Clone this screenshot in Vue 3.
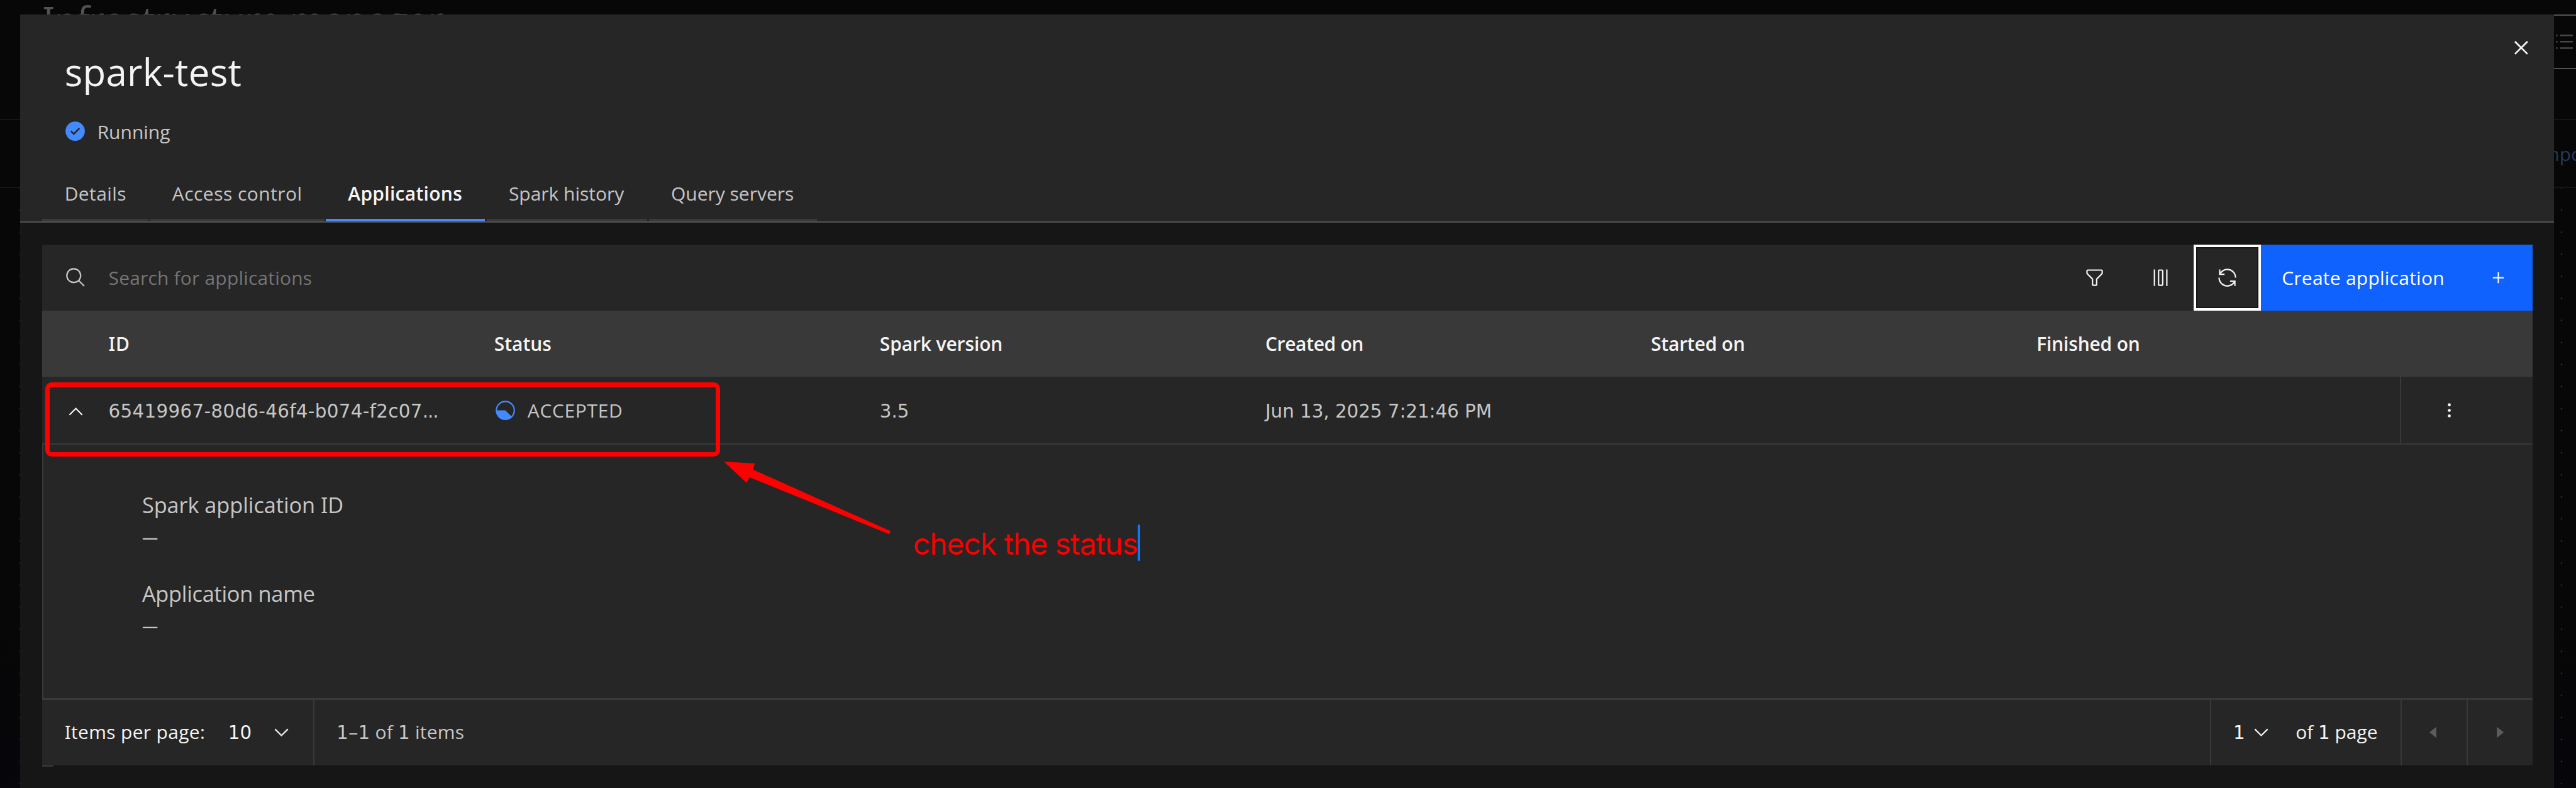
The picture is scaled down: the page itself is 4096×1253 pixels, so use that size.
<script setup>
const tabs = [
  { label: 'Details', cls: 't-details' },
  { label: 'Access control', cls: 't-access' },
  { label: 'Applications', cls: 't-apps', active: true },
  { label: 'Spark history', cls: 't-history' },
  { label: 'Query servers', cls: 't-query' },
]
</script>

<template>
  <div class="page">
    <div class="backdrop" aria-hidden="true">
      <div class="bg-title"><span class="si">I</span>nfrastructure manager</div>
      <div class="bg-line line-a"></div>
      <div class="bg-line line-b"></div>
      <div class="dots dots-left"></div>
      <div class="dots dots-right"></div>
      <div class="bg-button">
        <svg viewBox="0 0 33 28"><path d="M0 0h3v3H0zM8 0h24v3H8zM0 12h3v3H0zM8 12h24v3H8zM0 24h3v3H0zM8 24h24v3H8z" /></svg>
      </div>
      <div class="bg-import"><span class="si">I</span>mport</div>
    </div>

    <section class="panel">
      <header class="head">
        <svg class="close" viewBox="0 0 32 32"><path d="M17.4141 16L24 9.4141 22.5859 8 16 14.5859 9.4143 8 8 9.4141 14.5859 16 8 22.5859 9.4143 24 16 17.4141 22.5859 24 24 22.5859z" /></svg>
        <h1>spark-test</h1>
        <div class="state">
          <svg class="ic blue" viewBox="0 0 32 32"><path fill-rule="evenodd" d="M16 2A14 14 0 1 0 30 16 14 14 0 0 0 16 2ZM14 21.59l-5-5L10.59 15 14 18.41 21.41 11l1.6 1.59Z" /></svg>
          <span>Running</span>
        </div>
        <nav class="tabs">
          <div v-for="t in tabs" :key="t.label" class="tab" :class="[t.cls, { active: t.active }]">{{ t.label }}</div>
        </nav>
      </header>

      <div class="table">
        <div class="toolbar">
          <svg class="ic search" viewBox="0 0 32 32"><path d="M29 27.5859l-7.5521-7.5521a11.0177 11.0177 0 1 0-1.4141 1.4141L27.5859 29ZM4 13a9 9 0 1 1 9 9A9.01 9.01 0 0 1 4 13Z" /></svg>
          <span class="placeholder">Search for applications</span>
          <div class="tool"><svg class="ic" viewBox="0 0 32 32"><path d="M18 28H14a2 2 0 0 1-2-2V18.41L4.59 11A2 2 0 0 1 4 9.59V6A2 2 0 0 1 6 4H26a2 2 0 0 1 2 2V9.59A2 2 0 0 1 27.41 11L20 18.41V26A2 2 0 0 1 18 28ZM6 6V9.59l8 8V26h4V17.59l8-8V6Z" /></svg></div>
          <div class="tool"><svg class="ic" viewBox="0 0 32 32"><path d="M24 4H26V28H24zM18 6V26H14V6h4m0-2H14a2 2 0 0 0-2 2V26a2 2 0 0 0 2 2h4a2 2 0 0 0 2-2V6a2 2 0 0 0-2-2zM6 4H8V28H6z" /></svg></div>
          <div class="tool focused"><svg class="ic" viewBox="0 0 32 32"><path d="M12 10H6.78A11 11 0 0 1 27 16h2A13 13 0 0 0 6 7.68V4H4v8h8zM20 22h5.22A11 11 0 0 1 5 16H3a13 13 0 0 0 23 8.32V28h2V20H20z" /></svg></div>
          <div class="create">
            <span>Create application</span>
            <svg class="ic" viewBox="0 0 32 32"><path d="M17 15V8h-2v7H8v2h7v7h2v-7h7v-2z" /></svg>
          </div>
        </div>

        <div class="row thead">
          <div class="gutter"></div>
          <div class="cell c-id"><span class="si">I</span>D</div>
          <div class="cell">Status</div>
          <div class="cell c-version">Spark version</div>
          <div class="cell c-created">Created on</div>
          <div class="cell c-started">Started on</div>
          <div class="cell c-finished">Finished on</div>
        </div>

        <div class="row body">
          <div class="gutter"><svg class="ic chev-up" viewBox="0 0 16 16"><path d="M8 5L13 10 12.3 10.7 8 6.4 3.7 10.7 3 10z" /></svg></div>
          <div class="cell num v-id">65419967-80d6-46f4-b074-f2c07<span class="dots3">...</span></div>
          <div class="cell v-status">
            <svg class="ic blue" viewBox="0 0 32 32"><circle cx="16" cy="16" r="13" fill="none" stroke="#4589ff" stroke-width="2" /><path d="M16 16H3A13 13 0 0 0 25.2 25.2Z" /></svg>
            <span>ACCEPTED</span>
          </div>
          <div class="cell num">3.5</div>
          <div class="cell num v-created">Jun 13, 2025 7:21:46 PM</div>
          <div class="cell"></div>
          <div class="cell"></div>
          <div class="menu"><svg class="ic" viewBox="0 0 32 32"><circle cx="16" cy="8" r="2.2" /><circle cx="16" cy="16" r="2.2" /><circle cx="16" cy="24" r="2.2" /></svg></div>
        </div>

        <div class="detail">
          <div class="field f-id">
            <div class="label">Spark application <span class="si">I</span>D</div>
            <div class="value">—</div>
          </div>
          <div class="field f-name">
            <div class="label">Application name</div>
            <div class="value">—</div>
          </div>
        </div>

        <footer class="pager">
          <div class="size">
            <span class="p-label"><span class="si">I</span>tems per page:</span>
            <span class="p-size"><span class="digit">10</span></span>
            <svg class="ic" viewBox="0 0 16 16"><path d="M8 11L3 6 3.7 5.3 8 9.6 12.3 5.3 13 6z" /></svg>
          </div>
          <div class="range"><span class="digit">1</span>–<span class="digit">1</span> of <span class="digit">1</span> items</div>
          <div class="pages">
            <span class="p-page"><span class="digit">1</span></span>
            <svg class="ic" viewBox="0 0 16 16"><path d="M8 11L3 6 3.7 5.3 8 9.6 12.3 5.3 13 6z" /></svg>
            <span class="p-of">of <span class="digit">1</span> page</span>
          </div>
          <div class="arrow"><svg class="ic" viewBox="0 0 32 32"><path d="M20 24L10 16 20 8z" /></svg></div>
          <div class="arrow"><svg class="ic" viewBox="0 0 32 32"><path d="M12 8L22 16 12 24z" /></svg></div>
        </footer>
        <div class="stub"></div>
      </div>
    </section>

    <div class="mark"></div>
    <svg class="pointer" viewBox="0 0 315 138"><path d="M0 0L58.6 3.5 54.6 14.8 314.8 131.3 312.5 137.2 48.2 29.5 43 40.2z" /></svg>
    <div class="note"><span>check the status</span><i></i></div>
  </div>
</template>

<style>
html {
  font-size: calc(100vw / 48.65);
  background: #070707;
}
body {
  margin: 0;
  overflow: hidden;
}
</style>

<style scoped>
.page {
  position: relative;
  width: 48.65rem;
  height: 14.89rem;
  overflow: hidden;
  display: flex;
  box-sizing: border-box;
  padding: 0.27rem 0.41rem 0 0.38rem;
  background: linear-gradient(#070707 78%, #06060b);
  font-family: 'Open Sans', 'Noto Sans', sans-serif;
  font-size: 0.356rem;
  color: #c6c6c6;
  white-space: nowrap;
}
.page * {
  box-sizing: border-box;
}
.si {
  font-feature-settings: 'salt';
}
.digit {
  font-family: 'DejaVu Sans', sans-serif;
  font-size: 0.349rem;
  line-height: 0;
}
.ic {
  width: 0.4167rem;
  height: 0.4167rem;
  fill: #f4f4f4;
  flex: none;
  display: block;
}
.ic.blue {
  fill: #4589ff;
}

/* dimmed page behind the panel */
.backdrop {
  position: absolute;
  inset: 0;
}
.bg-title {
  position: absolute;
  left: 0.8rem;
  top: -0.13rem;
  line-height: 1rem;
  font-size: 0.713rem;
  letter-spacing: -0.011rem;
  color: #525252;
}
.bg-line {
  position: absolute;
  left: 0;
  right: 0;
  height: 0.024rem;
  background: #161616;
}
.line-a {
  top: 2.25rem;
}
.line-b {
  top: 3.53rem;
}
.dots {
  position: absolute;
  top: 3.55rem;
  bottom: 0;
  width: 0.04rem;
  background: radial-gradient(circle at 50% 0.2083rem, #303030 0.01rem, transparent 0.02rem) 0 -0.2083rem / 100% 0.4167rem repeat-y;
}
.dots-left {
  left: 0.36rem;
}
.dots-right {
  left: 48.357rem;
}
.bg-button {
  position: absolute;
  top: 0.27rem;
  right: 0;
  width: 0.5rem;
  height: 1.04rem;
  border-top: 0.024rem solid #525252;
  border-bottom: 0.024rem solid #525252;
}
.bg-button svg {
  position: absolute;
  left: 0.12rem;
  top: 0.362rem;
  width: 0.33rem;
  height: 0.28rem;
  fill: #484848;
}
.bg-import {
  position: absolute;
  left: 47.89rem;
  top: 2.61rem;
  line-height: 0.6rem;
  color: #25375c;
}

.panel {
  position: relative;
  flex: 1;
  display: flex;
  flex-direction: column;
  background: #161616;
}
.head {
  position: relative;
  height: 3.93rem;
  padding-left: 0.84rem;
  background: #262626;
  border-bottom: 0.024rem solid #525252;
}
.close {
  position: absolute;
  right: 0.37rem;
  top: 0.37rem;
  width: 0.52rem;
  height: 0.52rem;
  fill: #f4f4f4;
}
h1 {
  margin: 0;
  padding-top: 0.586rem;
  font-size: 0.713rem;
  line-height: 1rem;
  font-weight: 400;
  letter-spacing: 0.0027rem;
  color: #f4f4f4;
}
.state {
  display: flex;
  align-items: center;
  gap: 0.21rem;
  height: 0.6rem;
  margin: 0.327rem 0 0 -0.01rem;
}
.tabs {
  display: flex;
  gap: 0.026rem;
  margin: 0.413rem 0 0 -0.42rem;
}
.tab {
  height: 0.98rem;
  padding: 0 0 0.05rem 0.42rem;
  line-height: 0.93rem;
  border-bottom: 0.05rem solid #393939;
}
.active {
  border-bottom-color: #4589ff;
  font-weight: 600;
  color: #f4f4f4;
}
.t-details {
  width: 2.005rem;
  letter-spacing: 0.0048rem;
}
.t-access {
  width: 3.295rem;
  letter-spacing: 0.0058rem;
}
.t-apps {
  width: 3.01rem;
  letter-spacing: 0.0035rem;
}
.t-history {
  width: 3.04rem;
}
.t-query {
  width: 3.17rem;
}

.table {
  margin: 0.42rem 0.41rem 0 0.42rem;
  position: relative;
}
.toolbar {
  display: flex;
  align-items: center;
  height: 1.25rem;
  background: #262626;
}
.search {
  margin-left: 0.42rem;
  fill: #c6c6c6;
}
.placeholder {
  flex: 1;
  margin-left: 0.413rem;
  letter-spacing: 0.0023rem;
  color: #757575;
}
.tool {
  width: 1.25rem;
  height: 1.25rem;
  display: flex;
  align-items: center;
  justify-content: center;
}
.focused {
  width: 1.264rem;
  border: 0.05rem solid #fff;
  box-shadow: inset 0 0 0 0.022rem #161616;
}
.create {
  display: flex;
  align-items: center;
  justify-content: space-between;
  width: 5.136rem;
  height: 1.25rem;
  padding: 0 0.443rem 0 0.4rem;
  background: #0f62fe;
  color: #fff;
  letter-spacing: 0.003rem;
}
.row {
  display: flex;
  height: 1.25rem;
}
.thead {
  background: #393939;
  color: #f4f4f4;
  font-weight: 600;
}
.body {
  height: 1.28rem;
  background: #262626;
  border-bottom: 0.027rem solid #393939;
}
.gutter {
  width: 0.833rem;
  display: flex;
  align-items: center;
  padding-left: 0.42rem;
}
.chev-up {
  margin-top: 0.06rem;
}
.cell {
  width: 7.2825rem;
  height: 1.25rem;
  padding-left: 0.417rem;
  display: flex;
  align-items: center;
}
.c-id {
  letter-spacing: 0.008rem;
}
.c-version {
  letter-spacing: -0.0013rem;
}
.c-created {
  letter-spacing: -0.004rem;
}
.c-started {
  letter-spacing: -0.0025rem;
}
.c-finished {
  letter-spacing: -0.002rem;
}
.num {
  padding-top: 0.05rem;
  font-family: 'DejaVu Sans', sans-serif;
  font-size: 0.349rem;
}
.v-id {
  letter-spacing: 0.0036rem;
}
.dots3 {
  letter-spacing: -0.013rem;
}
.v-status {
  gap: 0.215rem;
  letter-spacing: 0.0077rem;
}
.v-created {
  letter-spacing: -0.0005rem;
}
.menu {
  flex: 1;
  display: flex;
  align-items: center;
  padding-left: 0.7rem;
  border-left: 0.024rem solid #393939;
}
.detail {
  height: 4.82rem;
  padding: 0.84rem 0 0 1.86rem;
  background: #262626;
  border-left: 0.026rem solid #393939;
  border-bottom: 0.04rem solid #393939;
}
.field {
  height: 1.67rem;
  font-size: 0.408rem;
}
.label {
  line-height: 0.6rem;
}
.value {
  font-size: 0.3rem;
  line-height: 0.62rem;
  font-weight: 600;
}
.f-id .label {
  letter-spacing: -0.001rem;
}
.f-name .label {
  letter-spacing: -0.0035rem;
}
.pager {
  display: flex;
  height: 1.23rem;
  background: #262626;
  color: #f4f4f4;
  line-height: 1.2rem;
}
.pager .ic {
  margin-top: 0.4rem;
}
.size {
  display: flex;
  width: 5.14rem;
  padding-left: 0.42rem;
  border-right: 0.024rem solid #393939;
}
.p-label {
  width: 3.09rem;
  letter-spacing: 0.004rem;
}
.p-size {
  width: 0.795rem;
}
.range {
  flex: 1;
  padding-left: 0.417rem;
  letter-spacing: 0.003rem;
  color: #c6c6c6;
}
.pages {
  display: flex;
  width: 3.595rem;
  padding-left: 0.417rem;
  border-left: 0.024rem solid #393939;
}
.p-page {
  width: 0.325rem;
}
.p-of {
  margin-left: 0.437rem;
}
.arrow {
  width: 1.25rem;
  padding-left: 0.4rem;
  border-left: 0.024rem solid #393939;
}
.arrow .ic {
  fill: #5c5c5c;
}
.stub {
  width: 0.21rem;
  height: 0.03rem;
  background: #393939;
}

/* annotations drawn over the page */
.mark {
  position: absolute;
  left: 0.85rem;
  top: 7.223rem;
  width: 12.75rem;
  height: 1.4rem;
  border: 0.084rem solid #f00;
  border-radius: 0.12rem;
}
.pointer {
  position: absolute;
  left: 13.672rem;
  top: 8.72rem;
  width: 3.15rem;
  height: 1.38rem;
  fill: #f00;
}
.note {
  position: absolute;
  left: 17.25rem;
  top: 9.89rem;
  display: flex;
  align-items: center;
  height: 0.72rem;
  font-family: Inter, sans-serif;
  font-size: 0.573rem;
  letter-spacing: -0.0143rem;
  color: #f00;
}
.note span {
  padding-top: 0.03rem;
}
.note i {
  width: 0.04rem;
  height: 0.7rem;
  border-radius: 0.02rem;
  background: #0a7aff;
}
</style>
